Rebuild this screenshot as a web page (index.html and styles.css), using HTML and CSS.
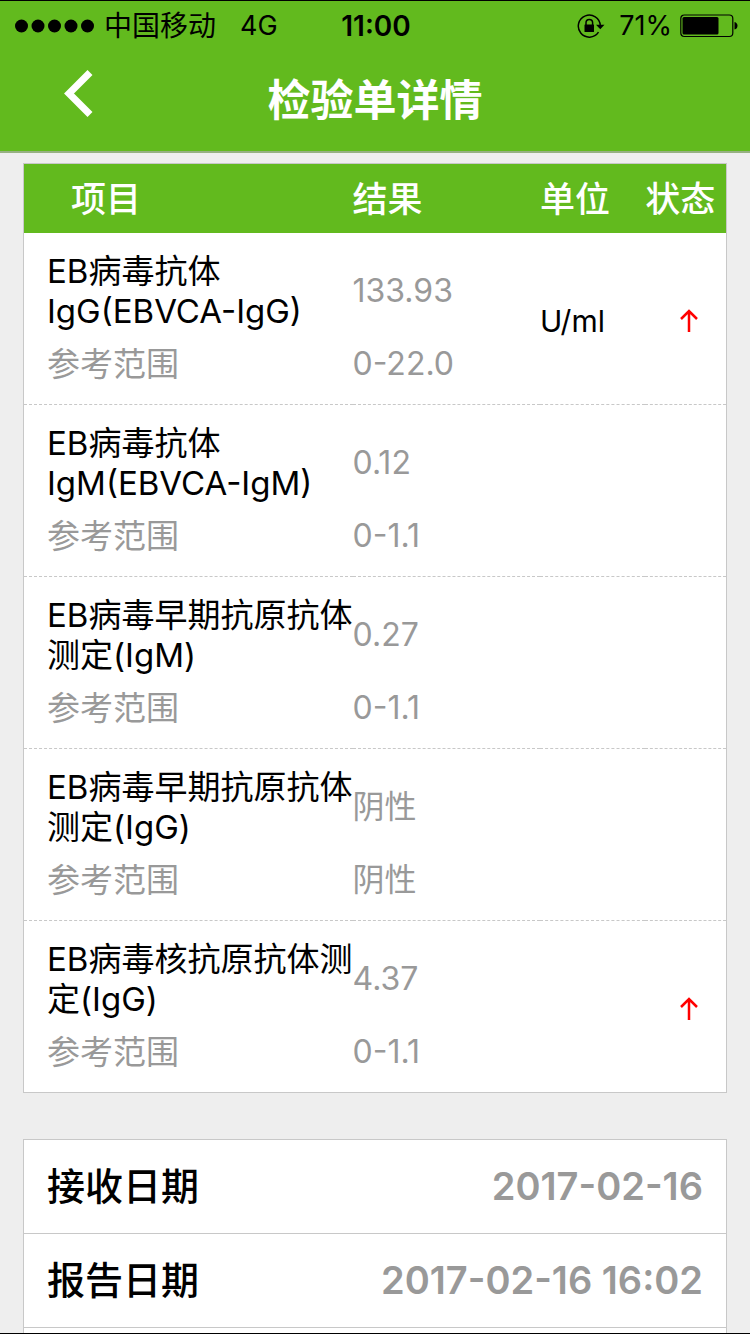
FILE: index.html
```html
<!DOCTYPE html>
<html lang="zh-CN">
<head>
  <meta charset="UTF-8">
  <meta name="viewport" content="width=device-width, initial-scale=1">
  <title>检验单详情</title>
  <link rel="stylesheet" href="styles.css">
</head>
<body>
  <div class="app">
    <header class="header">
      <div class="statusbar">
        <div class="statusbar-left">
          <svg class="signal" width="80" height="14" viewBox="0 0 80 14">
            <circle cx="7.5" cy="7" r="6.5"/>
            <circle cx="24" cy="7" r="6.5"/>
            <circle cx="40.5" cy="7" r="6.5"/>
            <circle cx="57" cy="7" r="6.5"/>
            <circle cx="73.5" cy="7" r="6.5"/>
          </svg>
          <span class="carrier">中国移动</span>
          <span>4G</span>
        </div>
        <div class="clock">11:00</div>
        <div class="statusbar-right">
          <svg class="lock" width="28" height="24" viewBox="0 0 28 24">
            <path d="M21.5 18.2A11 11 0 1 1 23.3 11.5" fill="none" stroke="#000" stroke-width="1.5"/>
            <path d="M19 10.8h8.500l-4.200 4.500z"/>
            <path d="M9 11V8.800a3.300 3.300 0 0 1 6.600 0V11" fill="none" stroke="#000" stroke-width="1.5"/>
            <rect x="7.500" y="10.500" width="9.500" height="7.500" rx="0.5"/>
          </svg>
          <span>71%</span>
          <svg class="battery" width="58" height="24" viewBox="0 0 58 24">
            <rect x="0.8" y="1" width="52" height="21.5" rx="3.5" fill="none" stroke="#000" stroke-width="1.2"/>
            <rect x="2.500" y="3" width="36" height="17.500" rx="1.5"/>
            <path d="M54.500 8c2 0.500 3 2 3 3.800s-1 3.300-3 3.800z"/>
          </svg>
        </div>
      </div>
      <nav class="navbar">
        <button class="back" type="button" aria-label="返回">
          <svg width="30" height="50" viewBox="0 0 30 50">
            <path d="M26 3.5L5 24.5L26 45.5" fill="none" stroke="#fff" stroke-width="7"/>
          </svg>
        </button>
        <h1 class="title">检验单详情</h1>
      </nav>
    </header>

    <main class="content">
      <table class="report">
        <thead>
          <tr>
            <th class="col-name">项目</th>
            <th class="col-result">结果</th>
            <th class="col-unit">单位</th>
            <th class="col-state">状态</th>
          </tr>
        </thead>
        <tbody>
          <tr class="item">
            <td class="name">EB病毒抗体IgG(EBVCA-IgG)</td>
            <td class="value">133.93</td>
            <td class="unit" rowspan="2">U/ml</td>
            <td class="state" rowspan="2">
              <svg width="20" height="24" viewBox="0 0 20 24"><path d="M10 23V2M2 10l8-8l8 8"/></svg>
            </td>
          </tr>
          <tr class="range">
            <td class="name">参考范围</td>
            <td class="value">0-22.0</td>
          </tr>
        </tbody>
        <tbody>
          <tr class="item">
            <td class="name">EB病毒抗体IgM(EBVCA-IgM)</td>
            <td class="value">0.12</td>
            <td class="unit" rowspan="2"></td>
            <td class="state" rowspan="2"></td>
          </tr>
          <tr class="range">
            <td class="name">参考范围</td>
            <td class="value">0-1.1</td>
          </tr>
        </tbody>
        <tbody>
          <tr class="item">
            <td class="name">EB病毒早期抗原抗体测定(IgM)</td>
            <td class="value">0.27</td>
            <td class="unit" rowspan="2"></td>
            <td class="state" rowspan="2"></td>
          </tr>
          <tr class="range">
            <td class="name">参考范围</td>
            <td class="value">0-1.1</td>
          </tr>
        </tbody>
        <tbody>
          <tr class="item">
            <td class="name">EB病毒早期抗原抗体测定(IgG)</td>
            <td class="value">阴性</td>
            <td class="unit" rowspan="2"></td>
            <td class="state" rowspan="2"></td>
          </tr>
          <tr class="range">
            <td class="name">参考范围</td>
            <td class="value">阴性</td>
          </tr>
        </tbody>
        <tbody>
          <tr class="item">
            <td class="name">EB病毒核抗原抗体测定(IgG)</td>
            <td class="value">4.37</td>
            <td class="unit" rowspan="2"></td>
            <td class="state" rowspan="2">
              <svg width="20" height="24" viewBox="0 0 20 24"><path d="M10 23V2M2 10l8-8l8 8"/></svg>
            </td>
          </tr>
          <tr class="range">
            <td class="name">参考范围</td>
            <td class="value">0-1.1</td>
          </tr>
        </tbody>
      </table>

      <dl class="info">
        <div class="info-row">
          <dt>接收日期</dt>
          <dd>2017-02-16</dd>
        </div>
        <div class="info-row">
          <dt>报告日期</dt>
          <dd>2017-02-16 16:02</dd>
        </div>
        <div class="info-row"></div>
      </dl>
    </main>
  </div>
</body>
</html>
```
FILE: styles.css
```css
* {
  box-sizing: border-box;
}

body {
  margin: 0;
  background: #eee;
  color: #000;
  font-family: Inter, "Noto Sans CJK SC", sans-serif;
}

.app {
  height: 100vh;
  display: flex;
  flex-direction: column;
  overflow: hidden;
  border-top: 1px solid #000;
  border-bottom: 1px solid #000;
}

.header {
  flex: none;
  background: #62ba1e;
  border-bottom: 2px solid #96b082;
}

.statusbar {
  display: grid;
  grid-template-columns: 1fr auto 1fr;
  align-items: center;
  height: 48px;
  padding: 0 12px 0 14px;
  font-size: 27px;
  line-height: 50px;
}

.statusbar-left,
.statusbar-right {
  display: flex;
  align-items: center;
}

.statusbar-right {
  justify-content: flex-end;
}

.carrier {
  margin: 0 24px 0 10px;
  font-size: 28px;
}

.clock {
  font-size: 28px;
  font-weight: 600;
}

.lock {
  margin-right: 14px;
}

.battery {
  margin-left: 8px;
}

.navbar {
  display: grid;
  grid-template-columns: 94px 1fr 94px;
  align-items: center;
  height: 102px;
}

.back {
  justify-self: end;
  display: flex;
  padding: 0;
  margin-bottom: 12px;
  border: 0;
  background: none;
  cursor: pointer;
}

.title {
  margin: 0;
  color: #fff;
  font-size: 43px;
  font-weight: 700;
  line-height: 60px;
  text-align: center;
}

.content {
  flex: 1;
  min-height: 0;
  padding: 10px 23px 0;
  overflow: hidden;
}

.report {
  width: 100%;
  table-layout: fixed;
  border-collapse: separate;
  border-spacing: 0;
  border: 1px solid #c8c8c8;
  background: #fff;
  font-size: 33px;
  line-height: 40px;
}

.report th {
  height: 69px;
  padding: 0;
  background: #62ba1e;
  color: #fff;
  font-size: 35px;
  font-weight: 500;
  text-align: left;
}

.report td {
  padding: 0;
}

.report .col-name {
  width: 46.8%;
  padding-left: 47px;
}

.col-result {
  width: 26.7%;
}

.col-unit {
  width: 15%;
}

.item td {
  padding-top: 18px;
}

.report .item .name,
.report .item .value {
  padding-top: 18px;
}

.report .range td {
  padding-top: 13px;
  padding-bottom: 20px;
  color: #999;
}

.report .name {
  padding-left: 23px;
}

.report .value {
  color: #999;
  font-size: 32px;
}

.report .unit {
  padding-top: 4px;
  font-size: 30px;
}

.report .state {
  padding: 4px 0 0 6px;
}

.state svg {
  display: block;
  margin: 0 auto;
  fill: none;
  stroke: #f00;
  stroke-width: 2.5;
}

.range td,
.item [rowspan] {
  border-bottom: 1px dashed #c8c8c8;
}

.report tbody:last-child .range td,
.report tbody:last-child [rowspan] {
  border-bottom: 0;
}

.info {
  margin: 46px 0 0;
  border: 1px solid #c8c8c8;
  background: #fff;
  font-size: 38px;
  line-height: 93px;
}

.info-row {
  display: flex;
  justify-content: space-between;
  min-height: 94px;
  padding: 0 23px;
  border-bottom: 1px solid #c8c8c8;
}

.info dt {
  font-weight: 500;
}

.info dd {
  margin: 0;
  color: #999;
  font-weight: 600;
}
```
